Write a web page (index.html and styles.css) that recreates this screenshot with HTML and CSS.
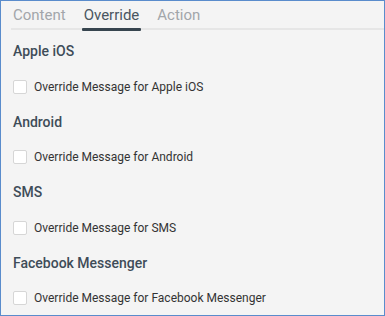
FILE: index.html
```html
<!DOCTYPE html>
<html>
<head>
<meta charset="utf-8">
<link rel="stylesheet" href="styles.css">
</head>
<body>
<div class="panel">
  <div class="tabs">
    <span class="tab">Content</span>
    <span class="tab active">Override</span>
    <span class="tab">Action</span>
  </div>
  <div class="section first">
    <div class="heading">Apple iOS</div>
    <label class="option"><span class="box"></span>Override Message for Apple iOS</label>
  </div>
  <div class="section">
    <div class="heading">Android</div>
    <label class="option"><span class="box"></span>Override Message for Android</label>
  </div>
  <div class="section">
    <div class="heading">SMS</div>
    <label class="option"><span class="box"></span>Override Message for SMS</label>
  </div>
  <div class="section">
    <div class="heading">Facebook Messenger</div>
    <label class="option"><span class="box"></span>Override Message for Facebook Messenger</label>
  </div>
</div>
</body>
</html>
```
FILE: styles.css
```css
html, body {
  margin: 0;
  padding: 0;
}
body {
  font-family: Roboto, "Liberation Sans", sans-serif;
}
.panel {
  width: 385px;
  height: 316px;
  box-sizing: border-box;
  border: 1px solid #5a8ccc;
  background: #f4f4f4;
  overflow: hidden;
}
.tabs {
  display: flex;
  gap: 14px;
  margin-left: 10px;
  border-bottom: 2px solid #e6e6e6;
  height: 27px;
}
.tab {
  font-size: 15px;
  color: #a2a6aa;
  padding: 5px 2px 0;
  line-height: 18px;
  position: relative;
}
.tab.active {
  color: #4a5661;
}
.tab.active::after {
  content: "";
  position: absolute;
  left: 0;
  right: 0;
  bottom: -3px;
  height: 3px;
  background: #37454f;
  border-radius: 1px;
}
.section {
  padding-left: 12px;
}
.heading {
  font-size: 14px;
  font-weight: 500;
  color: #3e4c58;
  margin-top: 18px;
  line-height: 18px;
}
.section.first .heading {
  margin-top: 12px;
}
.option {
  display: flex;
  align-items: center;
  margin-top: 18.5px;
  font-size: 12px;
  color: #333;
  line-height: 16px;
  height: 16px;
}
.box {
  width: 14px;
  height: 14px;
  box-sizing: border-box;
  border: 1px solid #d6d6d6;
  border-radius: 2px;
  background: #fff;
  margin-right: 7px;
}
```
